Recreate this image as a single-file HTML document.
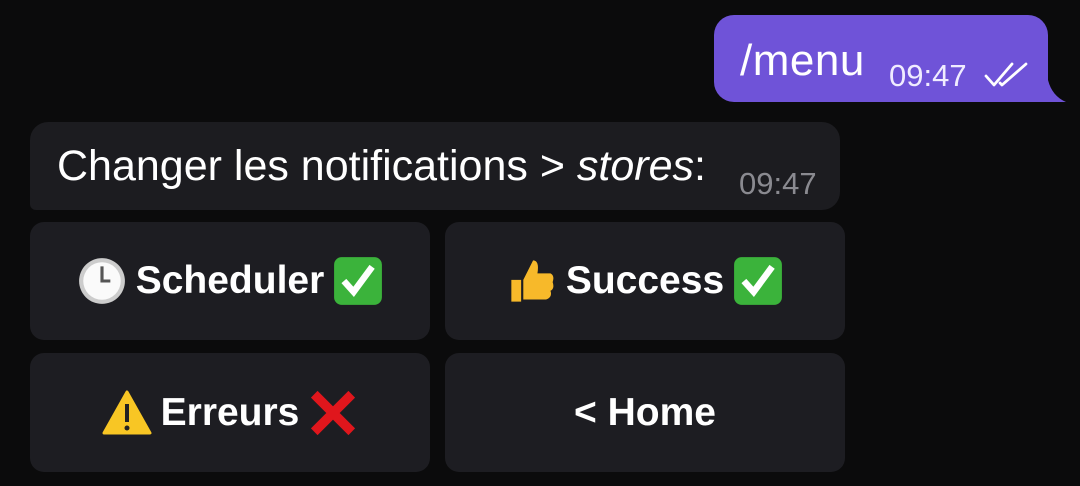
<!DOCTYPE html><html><head><meta charset="utf-8"><style>
body{margin:0;width:1080px;height:486px;background:#0b0b0c;overflow:hidden;position:relative;font-family:"Liberation Sans",sans-serif;color:#fff}
.a{position:absolute}
.me{left:714px;top:15px;width:334px;height:87px;background:#6f53d8;border-radius:20px 20px 6px 20px}
.msg{left:30px;top:122px;width:810px;height:88px;background:#1c1c20;border-radius:18px 18px 18px 6px}
.btn{background:#1d1d22;border-radius:14px;display:flex;align-items:center;justify-content:center;font-weight:bold;font-size:39px;gap:9px}
svg{display:block}
</style></head><body>
<div class="a me"></div>
<svg class="a" style="left:1040px;top:80px" width="30" height="24"><path d="M0 0 L8 0 Q12 16 26 22 L0 22Z" fill="#6f53d8"/></svg>
<div class="a" style="left:740px;top:36px;font-size:44px;letter-spacing:0.5px">/menu</div>
<div class="a" style="left:889px;top:58px;font-size:31px;color:#f0ecff">09:47</div>
<svg class="a" style="left:982px;top:60px" width="50" height="30" fill="none" stroke="#fff" stroke-width="2.8" stroke-linecap="round" stroke-linejoin="round"><path d="M4 16 L12 25 L30 4 M18 23 L20 25 L44 4"/></svg>
<div class="a msg"></div>
<div class="a" style="left:57px;top:142px;font-size:43px">Changer les notifications &gt; <i>stores</i>:</div>
<div class="a" style="left:739px;top:166px;font-size:31px;color:#8a8a90">09:47</div>
<div class="a btn" style="left:30px;top:222px;width:400px;height:118px">
<svg width="50" height="50" viewBox="0 0 48 48"><circle cx="24" cy="24" r="22" fill="#ccc"/><circle cx="24" cy="24" r="18" fill="#fafafa"/><path d="M24 10V24H32" stroke="#555" stroke-width="3" fill="none"/></svg>
<span>Scheduler</span>
<svg width="50" height="50" viewBox="0 0 46 46"><rect x="1" y="1" width="44" height="44" rx="7" fill="#3bb33b"/><path d="M10 23 L19 33 L36 10" stroke="#fff" stroke-width="6" fill="none"/></svg></div>
<div class="a btn" style="left:445px;top:222px;width:400px;height:118px">
<svg width="50" height="50" viewBox="0 0 46 46"><path d="M4 22h9v20H4z M15 22 L24 4 Q30 4 28 16 H40 Q44 18 42 24 Q44 30 40 32 Q42 38 36 40 H15Z" fill="#f7b92a"/></svg>
<span>Success</span>
<svg width="50" height="50" viewBox="0 0 46 46"><rect x="1" y="1" width="44" height="44" rx="7" fill="#3bb33b"/><path d="M10 23 L19 33 L36 10" stroke="#fff" stroke-width="6" fill="none"/></svg></div>
<div class="a btn" style="left:30px;top:353px;width:400px;height:119px">
<svg width="50" height="46" viewBox="0 0 50 46"><path d="M25 2 L48 43 H2Z" fill="#f8c624" stroke="#f8c624" stroke-width="3" stroke-linejoin="round"/><path d="M25 14 V32" stroke="#222" stroke-width="4"/><circle cx="25" cy="38" r="2.5" fill="#222"/></svg>
<span>Erreurs</span>
<svg width="50" height="50" viewBox="0 0 48 48"><path d="M6 6 L42 42 M42 6 L6 42" stroke="#e0161c" stroke-width="9"/></svg></div>
<div class="a btn" style="left:445px;top:353px;width:400px;height:119px"><span>&lt; Home</span></div>
</body></html>
